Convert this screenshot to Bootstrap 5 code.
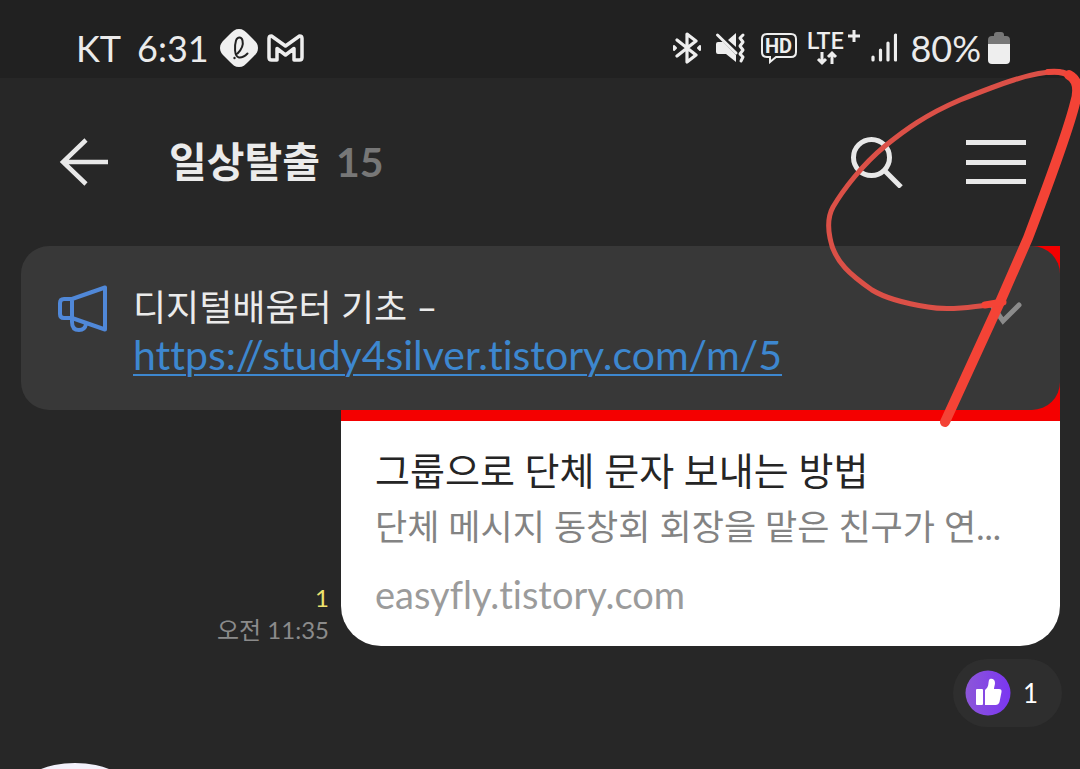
<!DOCTYPE html>
<html lang="ko">
<head>
<meta charset="utf-8">
<meta name="viewport" content="width=device-width, initial-scale=1">
<title>일상탈출</title>
<link href="https://cdn.jsdelivr.net/npm/bootstrap@5.3.0/dist/css/bootstrap.min.css" rel="stylesheet">
<style>
body{background:#272727;color:#ebebeb;font-family:Lato,"Noto Sans CJK KR",sans-serif;font-variant-ligatures:none}
.screen{height:100vh}
.statusbar{background:#212121;height:78px;padding:18px 70px 0 76px;font-size:36px;line-height:40px}
.statusbar svg,.topbar svg,.notice svg,.reaction svg{display:block;flex:none}
.status-icons{gap:14px;margin-right:10px}
.signal{margin:0 13px 0 8px}
.battery{margin-left:7px}
.topbar{height:168px;padding:0 52px 0 58px}
.bare{background:none;border:0;padding:0;color:inherit}
.room{font-size:41px;line-height:48px;font-weight:700;margin-left:59px}
.people{font-size:41px;line-height:48px;color:#777;font-weight:700}
.menu-btn{margin-left:62px}
.notice{top:0;left:21px;right:20px;height:164px;border-radius:28px;background:#383838;padding:37px 37px 0}
.notice-text{font-size:36px;line-height:48px;margin-left:25px;flex:1}
.notice-text a{font-size:41px;color:#3d87cf;text-decoration-thickness:2px;text-underline-offset:4px}
.fold-btn{margin-top:17px}
.bubble{width:719px;margin-right:20px;border-radius:0 0 40px 40px;background:#fff;overflow:hidden}
.preview{height:175px;background:#f40000}
.link-body{padding:21px 34px 27px}
.link-title{font-size:38px;line-height:56px;color:#252525}
.link-desc{font-size:35px;line-height:56px;color:#838383}
.link-host{font-size:38px;line-height:50px;margin-top:15px;color:#9b9b9b}
.stamp{font-size:24px;line-height:32px;color:#8b8b8b;margin-right:12px}
.unread{color:#efe36e}
.reaction{background:#2e2e2e;border-radius:34px;height:68px;margin:13px 18px 0 0;padding:0 24px 0 12px;gap:12px;font-size:26px;color:#fff}
.avatar{width:108px;height:108px;margin:36px 0 0 21px;background:#f3f1fb;border-radius:50%/25%}
.scribble{top:0;right:0;pointer-events:none}
</style>
</head>
<body>
<div class="screen position-relative overflow-hidden">
  <header class="statusbar d-flex align-items-center">
    <span>KT</span><span class="ms-3">6:31</span>
    <svg class="ms-2 me-2" width="42" height="38" viewBox="-3 0 42 38"><path d="M19 0C23 0 25 2 28 5l5 5c3 3 5 5 5 9s-2 6-5 9l-5 5c-3 3-5 5-9 5s-6-2-9-5l-5-5c-3-3-5-5-5-9s2-6 5-9l5-5c3-3 5-5 9-5z" fill="#f0f0f0"/><path d="M17.500 24.500c4-4 6-9 5-13-1-4-5-4-6.500 0-1.500 5-2 16 3 17 4 .5 6-1.500 8.500-4" fill="none" stroke="#222" stroke-width="2" stroke-linecap="round"/><circle cx="14.500" cy="29" r="1.200" fill="#222"/></svg>
    <svg width="37" height="28" viewBox="0 0 37 28"><path d="M4.500 2Q2 2 2 4.500v19Q2 26 4.500 26H10V14.500l8.500 6.500 8.500-6.500V26h5.500q2.500 0 2.500-2.500v-19Q35 2 32.500 2L18.500 12 4.500 2z" fill="none" stroke="#eee" stroke-width="3.500" stroke-linejoin="round"/></svg>
    <div class="status-icons d-flex align-items-center ms-auto">
      <svg width="28" height="32" viewBox="0 0 28 32" fill="none" stroke="#eee" stroke-width="3.200" stroke-linejoin="round" stroke-linecap="round"><path d="M4 8l19 15-9 7V2l9 7L4 24"/><path d="M1 14v4l2-2zM27 14v4l-2-2z" stroke-width="2"/></svg>
      <svg width="32" height="32" viewBox="0 0 32 32"><path d="M1 12q0-2 2-2h5l13 13v7L11 22H3q-2 0-2-2zM13 8l8-7v14z" fill="#eee"/><path d="M2.500 3L21 21" stroke="#eee" stroke-width="3" stroke-linecap="round"/><path d="M28 3l-3 3 3 4-3 4 3 4-3 4 3 3-2 4" fill="none" stroke="#eee" stroke-width="3" stroke-linejoin="round" stroke-linecap="round"/></svg>
      <svg width="36" height="32" viewBox="0 0 36 32"><path d="M6 2h24q5 0 5 5v13q0 5-5 5H15l-6 5v-5H6q-5 0-5-5V7q0-5 5-5z" fill="none" stroke="#eee" stroke-width="2"/><text x="4" y="21" font-family="Roboto,sans-serif" font-weight="700" font-size="20" fill="#eee">HD</text></svg>
    </div>
    <svg width="54" height="44" viewBox="0 -3 54 44"><text x="0" y="20" font-family="Roboto,sans-serif" font-weight="500" font-size="23" fill="#eee">LTE</text><path d="M41 7h12M47 1v12" stroke="#eee" stroke-width="3"/><path d="M15 23v11m-4-4l4 4 4-4M25 35V24m-4 4l4-4 4 4" fill="none" stroke="#eee" stroke-width="3"/></svg>
    <svg class="signal" width="28" height="30" viewBox="-2 0 28 30" stroke="#eee" stroke-width="3.200" stroke-linecap="round"><path d="M2 24v3M9.500 17v10M17 10v17M24.500 2v25"/></svg>
    <span>80%</span>
    <svg class="battery" width="22" height="32" viewBox="0 0 22 32"><path d="M6 3q0-3 3-3h4q3 0 3 3v1h2q4 0 4 4v5H0V8q0-4 4-4h2z" fill="#777"/><path d="M0 12h22v16q0 4-4 4H4q-4 0-4-4z" fill="#eee"/></svg>
  </header>

  <nav class="topbar d-flex align-items-center">
    <button class="bare" aria-label="뒤로"><svg width="52" height="48" viewBox="0 0 52 48" fill="none" stroke="#e8e8e8" stroke-width="4.500"><path d="M50 24H5M28 2L5 24l23 22"/></svg></button>
    <h1 class="room mb-0">일상탈출</h1><span class="people ms-3">15</span>
    <button class="bare ms-auto" aria-label="검색"><svg width="54" height="52" viewBox="0 0 54 52" fill="none" stroke="#e8e8e8" stroke-width="5"><circle cx="21.500" cy="21.500" r="18"/><path d="M34 34l17 17"/></svg></button>
    <button class="bare menu-btn" aria-label="메뉴"><svg width="62" height="46" viewBox="0 0 62 46" stroke="#e8e8e8" stroke-width="5"><path d="M0 3.500h60M0 23.500h60M0 42.500h60"/></svg></button>
  </nav>

  <main class="position-relative">
    <section class="notice position-absolute d-flex align-items-start">
      <svg width="50" height="50" viewBox="0 -2 50 50" fill="none" stroke="#5088d8" stroke-width="4" stroke-linejoin="round"><path d="M14 14L47 2.500v42L14 33zM14 14H6q-4 0-4 4v11q0 4 4 4h8M14 33v4q0 8 7 8 6 0 7-6"/></svg>
      <div class="notice-text"><div>디지털배움터 기초 –</div><a class="d-block" href="https://study4silver.tistory.com/m/5">https://study4silver.tistory.com/m/5</a></div>
      <button class="bare fold-btn" aria-label="접기"><svg width="34" height="26" viewBox="0 0 34 26" fill="none" stroke="#8b8b8b" stroke-width="5" stroke-linecap="round"><path d="M2 4l12 17L30 5"/></svg></button>
    </section>
    <div class="d-flex justify-content-end align-items-end">
      <div class="stamp text-end"><div class="unread">1</div><time>오전 11:35</time></div>
      <article class="bubble">
        <div class="preview"></div>
        <div class="link-body">
          <div class="link-title text-nowrap">그룹으로 단체 문자 보내는 방법</div>
          <div class="link-desc text-nowrap">단체 메시지 동창회 회장을 맡은 친구가 연...</div>
          <div class="link-host">easyfly.tistory.com</div>
        </div>
      </article>
    </div>
    <div class="d-flex justify-content-end">
      <button class="bare reaction d-flex align-items-center" aria-label="좋아요 1">
        <svg width="46" height="46" viewBox="0 0 46 46"><defs><linearGradient id="violet"><stop stop-color="#8c56d8"/><stop offset="1" stop-color="#7b36f2"/></linearGradient></defs><circle cx="23" cy="23" r="22.500" fill="url(#violet)"/><path d="M12 19h5q1 0 1 1v14q0 1-1 1h-5q-1 0-1-1V20q0-1 1-1zM20 20c4-3 3-6 4-10 1-2 6-2 6 3 0 2-1 4-1 6h5q3 0 2.500 3l-2 10q-1 3-4 3H20z" fill="#fff"/></svg>
        <span>1</span>
      </button>
    </div>
    <div class="avatar"></div>
  </main>

  <svg class="scribble position-absolute" width="270" height="440" viewBox="810 0 270 440" fill="none" stroke-linecap="round" stroke-linejoin="round">
    <path d="M1060 72C1035 70 995 86 960 100C925 115 905 130 885 146C862 165 843 190 833 207C828 216 828 228 830 238C834 262 852 276 872 290C890 301 915 305 928 307C950 311 980 306 1002 303" stroke="#db5047" stroke-width="5"/>
    <path d="M1048 72C1066 70 1079 77 1077 92" stroke="#ec493e" stroke-width="6"/>
    <path d="M1069 75C1078 80 1079 90 1075 103C1069 128 1050 180 1028 238L1000 302L945 422" stroke="#f44336" stroke-width="10"/>
    <path d="M985 305L1003 302" stroke="#f44336" stroke-width="7"/>
  </svg>
</div>
<script src="https://cdn.jsdelivr.net/npm/bootstrap@5.3.0/dist/js/bootstrap.bundle.min.js"></script>
</body>
</html>
